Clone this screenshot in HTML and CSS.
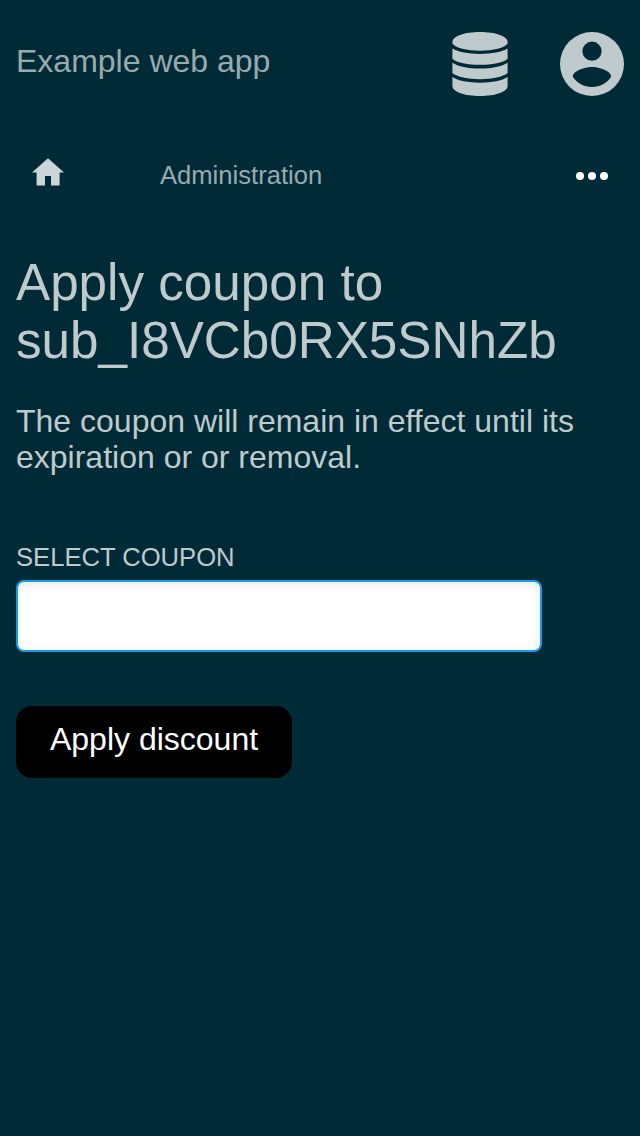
FILE: index.html
```html
<!DOCTYPE html>
<html lang="en">
<head>
<meta charset="utf-8">
<title>Apply coupon</title>
<link rel="stylesheet" href="styles.css">
</head>
<body>
<header class="header">
  <div class="brand">Example web app</div>
  <svg class="database" viewBox="0 0 56 64" aria-label="Administration">
    <path d="M28 0C43 0 55.6 4 55.6 10V11.6C53 16 41 18.8 28 18.8S3 16 .4 11.6V10C.4 4 13 0 28 0Z"/>
    <path d="M.4 16.6C6 20 16 21.9 28 21.9S50 20 55.6 16.6V26.8C51 30.8 40 32.8 28 32.8S5 30.8.4 26.8Z"/>
    <path d="M.4 30.7C6 34.4 16 36.6 28 36.6S50 34.4 55.6 30.7V41.1C51 45 40 47.2 28 47.2S5 45 .4 41.1Z"/>
    <path d="M.4 45.1C6 48.8 16 50.8 28 50.8S50 48.8 55.6 45.1V54C55.6 60 43 64 28 64S.4 60 .4 54Z"/>
  </svg>
  <svg class="account" viewBox="0 0 64 64" aria-label="Account">
    <path fill-rule="evenodd" d="M32 0A32 32 0 1 1 32 64A32 32 0 0 1 32 0ZM32 9.6A9.6 9.6 0 1 0 32 28.8A9.6 9.6 0 0 0 32 9.6ZM32 35C25.6 35 12.8 38.4 12.8 44.8C16.9 51.2 24 55 32 55S47.1 51.2 51.2 44.8C51.1 38.4 38.4 35 32 35Z"/>
  </svg>
</header>
<nav class="nav">
  <svg class="home" viewBox="0 0 32 28" aria-label="Home"><path d="M16 .3L32 14.6H27.6V27.5H19V18H13V27.5H4.6V14.6H0Z"/></svg>
  <a class="section">Administration</a>
  <svg class="more" viewBox="0 0 32 8" aria-label="Menu"><circle cx="4" cy="4" r="4"/><circle cx="16" cy="4" r="4"/><circle cx="28" cy="4" r="4"/></svg>
</nav>
<main class="content">
  <h1 class="title">Apply coupon to sub_I8VCb0RX5SNhZb</h1>
  <p class="description">The coupon will remain in effect until its expiration or or removal.</p>
  <form class="form">
    <label class="label" for="coupon">SELECT COUPON</label>
    <input class="input" id="coupon" type="text">
    <button class="button" type="button">Apply discount</button>
  </form>
</main>
</body>
</html>
```
FILE: styles.css
```css
* { box-sizing: border-box; }

body {
  margin: 0;
  min-height: 1136px;
  background: #002b36;
  color: #bfcacd;
  font-family: "Liberation Sans", Arial, sans-serif;
  font-size: 32px;
  line-height: 36px;
}

.header {
  display: flex;
  height: 128px;
  padding: 32px 16px;
}

.brand {
  flex: 1;
  padding-top: 11px;
  color: #99aaaf;
}

.database { width: 56px; height: 64px; margin-right: 52px; fill: #bfcacd; }
.account { width: 64px; height: 64px; fill: #bfcacd; }

.nav {
  display: flex;
  align-items: flex-start;
  height: 96px;
  padding: 0 32px;
}

.home { width: 32px; height: 28px; margin: 30px 96px 0 0; fill: #ccd5d7; }

.section {
  flex: 1;
  padding-top: 33px;
  color: #99aaaf;
  font-size: 25.6px;
  line-height: 29px;
}

.more { width: 32px; height: 8px; margin-top: 44px; fill: #fff; }

.content { padding: 30px 16px 0; }

.title {
  margin: 0;
  font-size: 51.2px;
  font-weight: 400;
  line-height: 58px;
}

.description { margin: 33px 0 68px; }

.form {
  display: flex;
  flex-direction: column;
  align-items: flex-start;
}

.label { font-size: 25.6px; line-height: 29px; }

.input {
  width: 526px;
  height: 72px;
  margin: 8px 0 54px;
  padding: 0 16px;
  border: 2px solid #119fea;
  border-radius: 8px;
  outline: none;
  background: #fff;
  box-shadow: inset 0 2px 8px rgba(0, 0, 0, .1);
  font: inherit;
}

.button {
  width: 276px;
  height: 72px;
  padding: 0 0 6px;
  border: 0;
  border-radius: 16px;
  background: #000;
  color: #fff;
  font: inherit;
}
```
